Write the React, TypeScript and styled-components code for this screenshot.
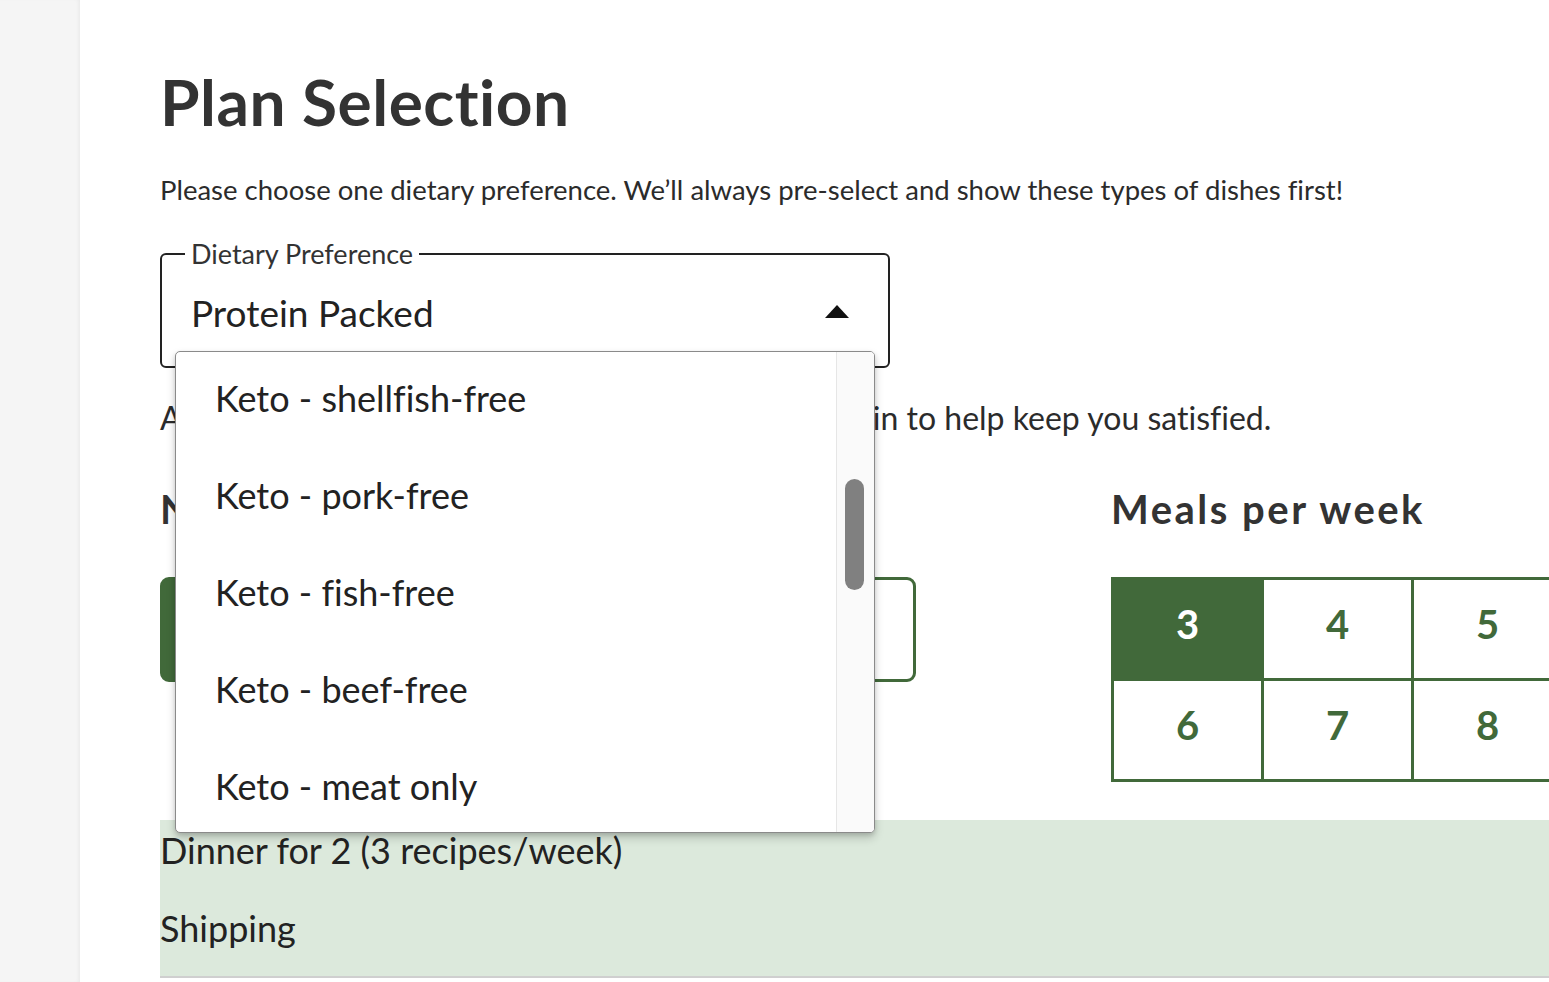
import React from 'react'
import styled, { createGlobalStyle } from 'styled-components'

const GlobalStyle = createGlobalStyle`
  html, body {
    margin: 0;
    padding: 0;
    background: #ffffff;
    overflow: hidden;
  }
  body {
    font-family: "Lato", "Noto Sans", "Liberation Sans", sans-serif;
    font-variant-ligatures: none;
    color: #2b2b2b;
  }
`

const green = '#41693a'

const Page = styled.div`
  display: flex;
  min-height: 982px;
  width: 1549px;
  overflow: hidden;
`

const Sidebar = styled.aside`
  width: 80px;
  flex: none;
  background: #f5f5f5;
  box-shadow: inset -3px 0 4px -2px rgba(0, 0, 0, 0.06);
`

const Main = styled.main`
  flex: 1;
  padding: 66px 0 0 80px;
  min-width: 0;
`

const Title = styled.h1`
  font-family: "Lato", "Noto Sans", sans-serif;
  font-weight: 700;
  font-size: 64px;
  line-height: 72px;
  letter-spacing: 0.5px;
  color: #333333;
  margin: 0 0 34px;
`

const Intro = styled.p`
  font-size: 27.5px;
  line-height: 36px;
  margin: 0 0 33px;
  white-space: nowrap;
`

const SelectWrap = styled.div`
  position: relative;
  width: 730px;
`

const Field = styled.fieldset`
  margin: 0;
  border: 2px solid #222222;
  border-radius: 6px;
  padding: 0 40px 25px 29px;
  height: 127px;
  box-sizing: border-box;
`

const Legend = styled.legend`
  font-size: 27px;
  line-height: 26px;
  padding: 0 6px;
  margin-left: -6px;
  color: #333333;
`

const Value = styled.div`
  display: flex;
  align-items: center;
  justify-content: space-between;
  height: 58px;
  margin-top: 16px;
  font-size: 37px;
  color: #222222;
`

const Caret = styled.svg`
  width: 24px;
  height: 13px;
  margin-right: -1px;
  margin-bottom: 2px;
`

const Menu = styled.ul`
  position: absolute;
  top: 110px;
  left: 15px;
  width: 700px;
  height: 482px;
  box-sizing: border-box;
  margin: 0;
  padding: 0;
  list-style: none;
  background: #ffffff;
  border: 1px solid #8a8a8a;
  border-radius: 5px;
  box-shadow: 0 5px 10px rgba(0, 0, 0, 0.18), 0 2px 4px rgba(0, 0, 0, 0.12);
  overflow: hidden;
  display: flex;
  z-index: 5;
`

const Options = styled.div`
  flex: 1;
`

const Option = styled.li`
  box-sizing: border-box;
  height: 97px;
  display: flex;
  align-items: center;
  padding: 0 39px 6px;
  font-size: 36px;
  color: #222222;
`

const Track = styled.div`
  position: relative;
  width: 37px;
  flex: none;
  background: #fafafa;
  border-left: 1px solid #e6e6e6;
`

const Thumb = styled.div`
  position: absolute;
  left: 8px;
  top: 127px;
  width: 19px;
  height: 111px;
  border-radius: 10px;
  background: #808080;
`

const Note = styled.p`
  font-size: 32px;
  line-height: 40px;
  margin: 30px 0 0;
  white-space: nowrap;
`

const Columns = styled.div`
  display: flex;
  gap: 195px;
  margin-top: 49px;
`

const Column = styled.section<{ $width?: string }>`
  width: ${p => p.$width || 'auto'};
  flex: none;
`

const SubTitle = styled.h2`
  font-family: "Lato", "Noto Sans", sans-serif;
  font-weight: 700;
  font-size: 40px;
  line-height: 44px;
  letter-spacing: 2.5px;
  color: #333333;
  margin: 0 0 46px;
`

const ToggleRow = styled.div`
  display: flex;
  gap: 20px;
`

const Toggle = styled.button<{ $active?: boolean }>`
  flex: 1;
  height: 105px;
  border: 3px solid ${green};
  border-radius: 9px;
  background: ${p => (p.$active ? green : '#ffffff')};
  color: ${p => (p.$active ? '#ffffff' : green)};
  font-family: "Lato", sans-serif;
  font-weight: 700;
  font-size: 38px;
`

const Grid = styled.div`
  display: grid;
  grid-template-columns: repeat(3, 150px);
  grid-auto-rows: 101px;
  border-top: 3px solid ${green};
  border-left: 3px solid ${green};
  width: max-content;
`

const Cell = styled.div<{ $active?: boolean }>`
  display: flex;
  align-items: center;
  justify-content: center;
  padding-bottom: 10px;
  border-right: 3px solid ${green};
  border-bottom: 3px solid ${green};
  background: ${p => (p.$active ? green : '#ffffff')};
  color: ${p => (p.$active ? '#ffffff' : green)};
  font-family: "Lato", sans-serif;
  font-weight: 700;
  font-size: 40px;
`

const Summary = styled.div`
  margin-top: 38px;
  background: #dce9dc;
  padding: 6px 0 0;
  border-bottom: 2px solid #cfcfcf;
`

const SummaryLine = styled.div`
  font-size: 36px;
  line-height: 48px;
  padding-bottom: 30px;
  color: #222222;

  &:last-child {
    padding-bottom: 24px;
  }
`

const options = [
  'Keto - shellfish-free',
  'Keto - pork-free',
  'Keto - fish-free',
  'Keto - beef-free',
  'Keto - meat only',
]

export default function App() {
  return (
    <>
      <GlobalStyle />
      <Page>
        <Sidebar />
        <Main>
          <Title>Plan Selection</Title>
          <Intro>
            Please choose one dietary preference. We’ll always pre-select and show these types of dishes first!
          </Intro>
          <SelectWrap>
            <Field>
              <Legend>Dietary Preference</Legend>
              <Value>
                Protein Packed
                <Caret viewBox="0 0 24 13">
                  <polygon points="0,13 12,0 24,13" fill="#111111" />
                </Caret>
              </Value>
            </Field>
            <Menu>
              <Options>
                {options.map(o => (
                  <Option key={o}>{o}</Option>
                ))}
              </Options>
              <Track>
                <Thumb />
              </Track>
            </Menu>
          </SelectWrap>
          <Note>All the Protein Packed dishes are loaded with protein to help keep you satisfied.</Note>
          <Columns>
            <Column $width="756px">
              <SubTitle>Number of people</SubTitle>
              <ToggleRow>
                <Toggle $active>2</Toggle>
                <Toggle>4</Toggle>
              </ToggleRow>
            </Column>
            <Column>
              <SubTitle>Meals per week</SubTitle>
              <Grid>
                {[3, 4, 5, 6, 7, 8].map(n => (
                  <Cell key={n} $active={n === 3}>
                    {n}
                  </Cell>
                ))}
              </Grid>
            </Column>
          </Columns>
          <Summary>
            <SummaryLine>Dinner for 2 (3 recipes/week)</SummaryLine>
            <SummaryLine>Shipping</SummaryLine>
          </Summary>
        </Main>
      </Page>
    </>
  )
}
